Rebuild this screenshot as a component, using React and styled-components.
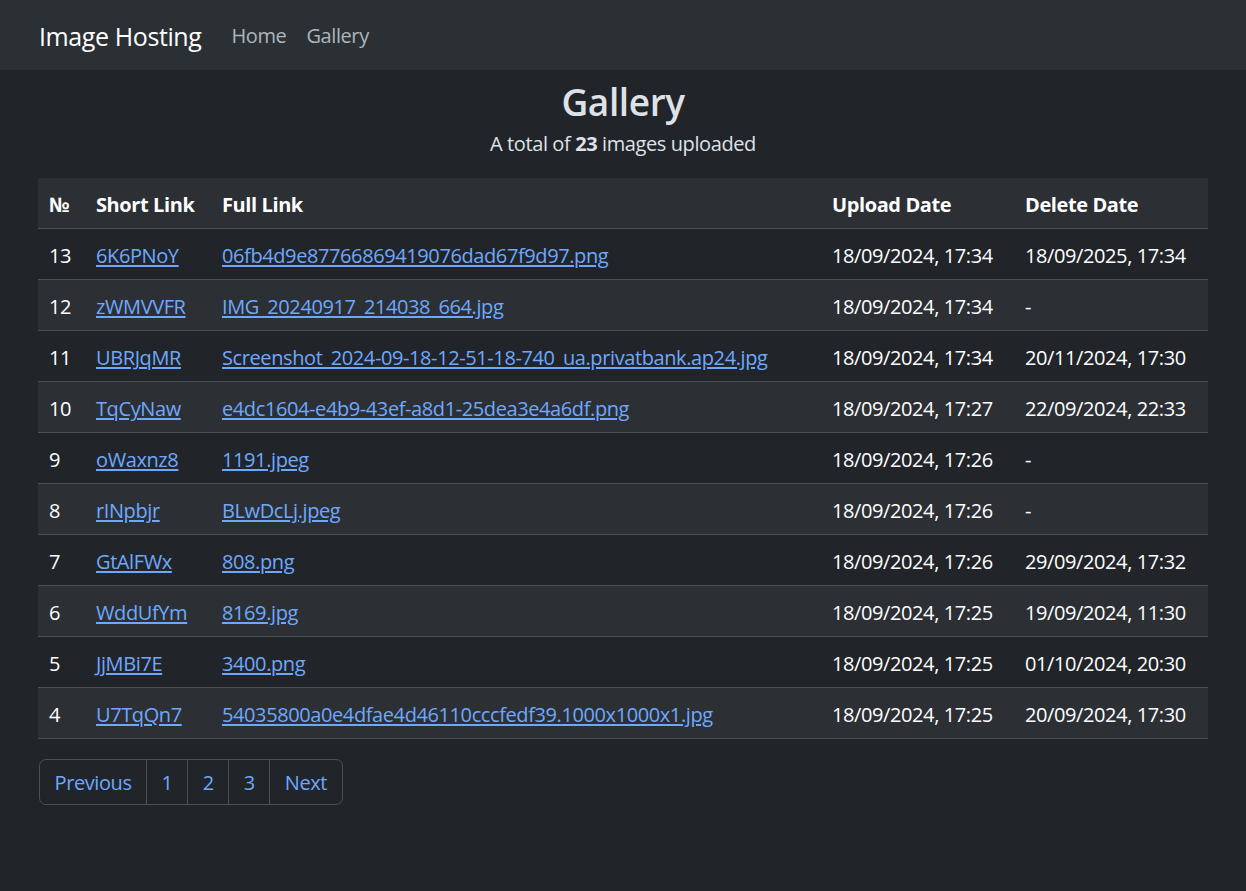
import React from "react";
import styled, { createGlobalStyle, css } from "styled-components";

const FONT = `"Open Sans", "Noto Sans", "Liberation Sans", sans-serif`;

const GlobalStyle = createGlobalStyle`
  html, body {
    margin: 0;
    padding: 0;
    background-color: #212529;
  }
  body {
    font-family: ${FONT};
    font-size: 20px;
    line-height: 1.5;
    letter-spacing: -0.02em;
    color: #dee2e6;
    min-height: 891px;
  }
  * {
    box-sizing: border-box;
  }
`;

const Navbar = styled.nav`
  display: flex;
  align-items: center;
  height: 70px;
  padding-top: 2px;
  background-color: #2b3035;
`;

const Container = styled.div`
  display: flex;
  align-items: center;
  width: 1170px;
  margin: 0 auto;
  padding-left: 1px;
  ${(props) =>
    props.column &&
    css`
      flex-direction: column;
      align-items: stretch;
      padding-left: 0;
    `}
`;

const Brand = styled.a`
  font-size: 25px;
  line-height: 37px;
  color: #ffffff;
  text-decoration: none;
  margin-right: 20px;
`;

const NavLink = styled.a`
  font-size: 20px;
  padding: 0 10px;
  color: rgba(222, 226, 230, 0.75);
  text-decoration: none;
`;

const Title = styled.h2`
  margin: 10px 0 5px;
  text-align: center;
  font-size: 37px;
  font-weight: 600;
  line-height: 1.2;
  color: #dee2e6;
`;

const Subtitle = styled.p`
  margin: 0 0 19px;
  text-align: center;
  font-size: 20px;
  line-height: 30px;

  b {
    font-weight: 700;
  }
`;

const Table = styled.table`
  width: 1170px;
  border-collapse: collapse;
  table-layout: fixed;
  margin-bottom: 20px;
`;

const Row = styled.tr`
  background-color: ${(props) => (props.striped ? "#2c3034" : "#212529")};
  border-bottom: 1px solid #495057;
`;

const HeadCell = styled.th`
  width: ${(props) => props.width}px;
  padding: 12px 10px 8px 11px;
  text-align: left;
  font-weight: 700;
  font-size: 20px;
  line-height: 30px;
  color: #ffffff;
`;

const Cell = styled.td`
  padding: 12px 10px 8px 11px;
  font-size: 20px;
  line-height: 30px;
  color: #ffffff;
  white-space: nowrap;
`;

const Link = styled.a`
  color: #6ea8fe;
  text-decoration: underline;
  text-underline-offset: 2px;
`;

const Pagination = styled.ul`
  display: flex;
  align-self: flex-start;
  list-style: none;
  margin: 0 0 0 1px;
  padding: 0;
  border: 1px solid #495057;
  border-radius: 7px;
  overflow: hidden;
`;

const PageItem = styled.li`
  padding: 8px 14.5px 7px;
  font-size: 20px;
  line-height: 29px;
  color: #6ea8fe;
  & + & {
    border-left: 1px solid #495057;
  }
`;

const columns = [
  { label: "№", width: 47 },
  { label: "Short Link", width: 126 },
  { label: "Full Link", width: 610 },
  { label: "Upload Date", width: 193 },
  { label: "Delete Date", width: 194 },
];

const images = [
  { id: 13, short: "6K6PNoY", full: "06fb4d9e87766869419076dad67f9d97.png", uploaded: "18/09/2024, 17:34", deleted: "18/09/2025, 17:34" },
  { id: 12, short: "zWMVVFR", full: "IMG_20240917_214038_664.jpg", uploaded: "18/09/2024, 17:34", deleted: "-" },
  { id: 11, short: "UBRJqMR", full: "Screenshot_2024-09-18-12-51-18-740_ua.privatbank.ap24.jpg", uploaded: "18/09/2024, 17:34", deleted: "20/11/2024, 17:30" },
  { id: 10, short: "TqCyNaw", full: "e4dc1604-e4b9-43ef-a8d1-25dea3e4a6df.png", uploaded: "18/09/2024, 17:27", deleted: "22/09/2024, 22:33" },
  { id: 9, short: "oWaxnz8", full: "1191.jpeg", uploaded: "18/09/2024, 17:26", deleted: "-" },
  { id: 8, short: "rINpbjr", full: "BLwDcLj.jpeg", uploaded: "18/09/2024, 17:26", deleted: "-" },
  { id: 7, short: "GtAlFWx", full: "808.png", uploaded: "18/09/2024, 17:26", deleted: "29/09/2024, 17:32" },
  { id: 6, short: "WddUfYm", full: "8169.jpg", uploaded: "18/09/2024, 17:25", deleted: "19/09/2024, 11:30" },
  { id: 5, short: "JjMBi7E", full: "3400.png", uploaded: "18/09/2024, 17:25", deleted: "01/10/2024, 20:30" },
  { id: 4, short: "U7TqQn7", full: "54035800a0e4dfae4d46110cccfedf39.1000x1000x1.jpg", uploaded: "18/09/2024, 17:25", deleted: "20/09/2024, 17:30" },
];

export default function App() {
  return (
    <>
      <GlobalStyle />
      <Navbar>
        <Container>
          <Brand href="#">Image Hosting</Brand>
          <NavLink href="#">Home</NavLink>
          <NavLink href="#">Gallery</NavLink>
        </Container>
      </Navbar>
      <Container column>
        <Title>Gallery</Title>
        <Subtitle>
          A total of <b>23</b> images uploaded
        </Subtitle>
        <Table>
          <thead>
            <Row striped>
              {columns.map((c) => (
                <HeadCell key={c.label} width={c.width}>
                  {c.label}
                </HeadCell>
              ))}
            </Row>
          </thead>
          <tbody>
            {images.map((img, i) => (
              <Row key={img.id} striped={i % 2 === 1}>
                <Cell>{img.id}</Cell>
                <Cell>
                  <Link href="#">{img.short}</Link>
                </Cell>
                <Cell>
                  <Link href="#">{img.full}</Link>
                </Cell>
                <Cell>{img.uploaded}</Cell>
                <Cell>{img.deleted}</Cell>
              </Row>
            ))}
          </tbody>
        </Table>
        <Pagination>
          <PageItem>Previous</PageItem>
          <PageItem>1</PageItem>
          <PageItem>2</PageItem>
          <PageItem>3</PageItem>
          <PageItem>Next</PageItem>
        </Pagination>
      </Container>
    </>
  );
}
